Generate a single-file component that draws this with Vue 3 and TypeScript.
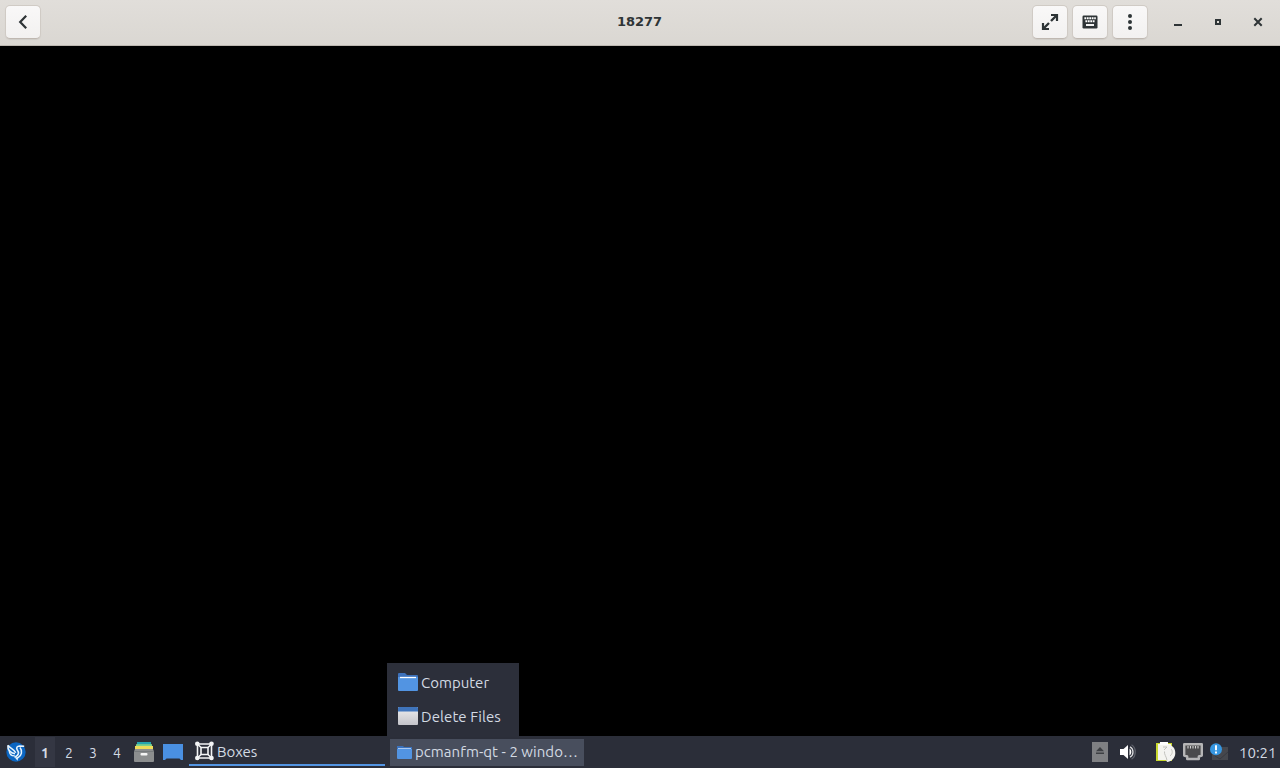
<script setup lang="ts">
import { ref } from "vue";

const title = "18277";
const clock = "10:21";
const desktops = [1, 2, 3, 4];
const activeDesktop = ref(1);
const showGroup = ref(true);
</script>

<template>
  <div class="screen">
    <!-- Window header -->
    <header class="header-bar">
      <div class="header-left">
        <button class="header-btn" aria-label="Back">
          <svg width="16" height="16" viewBox="0 0 16 16"><path d="M11.2 1.8 5.2 8l6 6.2" fill="none" stroke="#2e3436" stroke-width="2.2" /></svg>
        </button>
      </div>
      <h1 class="title">{{ title }}</h1>
      <div class="header-right">
        <button class="header-btn" aria-label="Fullscreen">
          <svg width="18" height="18" viewBox="0 0 18 18">
            <path d="M10 2h6v6M2 10v6h6" fill="none" stroke="#2e3436" stroke-width="2.2" />
            <path d="M16 2l-6 6M2 16l6-6" stroke="#2e3436" stroke-width="2.4" />
          </svg>
        </button>
        <button class="header-btn" aria-label="Keyboard">
          <svg width="16" height="14" viewBox="0 0 16 14">
            <rect x="0.5" y="0.5" width="15" height="13" rx="1.2" fill="#2e3436" />
            <path d="M2.4 3.3h11.4M3.4 6.2h9.6" stroke="#fff" stroke-width="1.9" stroke-dasharray="1.8 0.65" />
            <path d="M4 10h8" stroke="#fff" stroke-width="1.9" />
          </svg>
        </button>
        <button class="header-btn" aria-label="Menu">
          <svg width="6" height="18" viewBox="0 0 6 18" fill="#2e3436">
            <circle cx="3" cy="3" r="2" /><circle cx="3" cy="9" r="2" /><circle cx="3" cy="15" r="2" />
          </svg>
        </button>
        <div class="window-controls">
          <button class="win-btn" aria-label="Minimize">
            <svg width="16" height="16" viewBox="0 0 16 16"><path d="M4 10h8v2H4z" fill="#2e3436" /></svg>
          </button>
          <button class="win-btn" aria-label="Maximize">
            <svg width="16" height="16" viewBox="0 0 16 16"><path d="M6 6h4v4H6z" fill="none" stroke="#2e3436" stroke-width="2" /></svg>
          </button>
          <button class="win-btn" aria-label="Close">
            <svg width="16" height="16" viewBox="0 0 16 16"><path d="M4.3 4.3l7.4 7.4M11.7 4.3l-7.4 7.4" stroke="#2e3436" stroke-width="2" /></svg>
          </button>
        </div>
      </div>
    </header>

    <!-- Guest display -->
    <main class="display"></main>

    <!-- Panel -->
    <footer class="panel">
      <button class="start" aria-label="Applications">
        <svg width="20" height="20" viewBox="0 0 20 20">
          <circle cx="10" cy="10" r="9.7" fill="#0b66c2" />
          <path d="M1.8 3.2c2.7 3.4 6.5 4 8 7.6M1.8 3.2c-.2 3.8 2 7.6 7.2 8.6" fill="none" stroke="#e6f3fd" stroke-width="1.5" />
          <path d="M3.2 8.6c.2 3.4 2.4 5.4 5.6 5.3" fill="none" stroke="#e6f3fd" stroke-width="1.3" />
          <path d="M18.2 4.2l-4.7-.2c-2.4 0-3.5 1.9-2.3 3.7 1.6 2.2 2.6 5.4-2.7 7.5" fill="none" stroke="#e6f3fd" stroke-width="1.6" />
          <path d="M14 5.5c2.6 3.4 2 8-2.2 10.3" fill="none" stroke="#e6f3fd" stroke-width="1.5" />
          <path d="M12.2 15l-3.4.6 2.8 3.2z" fill="#e6f3fd" />
        </svg>
      </button>

      <div class="desktops">
        <button
          v-for="n in desktops"
          :key="n"
          :class="['desktop-btn', { active: n === activeDesktop }]"
          @click="activeDesktop = n"
        >{{ n }}</button>
      </div>

      <div class="launchers">
        <svg width="20" height="22" viewBox="0 0 20 22">
          <path d="M3 1h14v4H3z" fill="#24a4ae" />
          <path d="M2 3.2h16v4H2z" fill="#7ed08a" />
          <path d="M1 5h18v4H1z" fill="#eedb59" />
          <path d="M1 8h18l1 2.5V20a1 1 0 0 1-1 1H1a1 1 0 0 1-1-1v-9.5z" fill="#8c8e8f" />
          <path d="M0 10.5h20" stroke="#777b7d" />
          <rect x="6.5" y="12" width="7" height="2.6" rx="1" fill="#f5f5f5" />
        </svg>
        <svg width="20" height="16" viewBox="0 0 20 16">
          <path d="M0 0h20v16h-2l-1.5-1.5h-13L2 16H0z" fill="#4a90e2" />
        </svg>
      </div>

      <div class="tasks">
        <button class="task focused">
          <svg width="20" height="20" viewBox="0 0 20 20" fill="none" stroke="#f3f4f5">
            <path d="M3.5 3h14v14h-14z" stroke-width="1.6" />
            <path d="M7 6.5h7v7H7z" stroke-width="1.6" />
            <path d="M3.5 3 7 6.5M17.5 3 14 6.5M3.5 17 7 13.5M17.5 17 14 13.5" stroke-width="1.5" />
            <g fill="#f3f4f5" stroke="none">
              <circle cx="3.3" cy="2.8" r="2.3" /><circle cx="17.5" cy="2.8" r="2.3" />
              <circle cx="3.3" cy="17" r="2.3" /><circle cx="17.5" cy="17" r="2.3" />
            </g>
          </svg>
          <span>Boxes</span>
        </button>
        <div class="task-group">
          <button class="task hovered" @click="showGroup = !showGroup">
            <svg width="15" height="13" viewBox="0 0 15 13">
              <path d="M0 0h6l1 1h8v3H0z" fill="#3b72bd" />
              <path d="M0 3h15v9a1 1 0 0 1-1 1H1a1 1 0 0 1-1-1z" fill="#5294e2" />
              <path d="M1 2.5h13" stroke="#a9c8f0" />
            </svg>
            <span class="group-label">pcmanfm-qt - 2 windo…</span>
          </button>
          <div v-if="showGroup" class="group-popup">
            <button class="popup-item">
              <svg width="20" height="18" viewBox="0 0 20 18">
                <path d="M0 1a1 1 0 0 1 1-1h6l2 2h10a1 1 0 0 1 1 1v4H0z" fill="#3d71ba" />
                <path d="M0 4h20v13a1 1 0 0 1-1 1H1a1 1 0 0 1-1-1z" fill="#5294e2" />
                <path d="M2 4.5h16" stroke="#fff" stroke-width="1.3" />
              </svg>
              <span>Computer</span>
            </button>
            <button class="popup-item">
              <svg width="20" height="18" viewBox="0 0 20 18">
                <defs>
                  <linearGradient id="pane" x1="0" y1="0" x2="0" y2="1">
                    <stop offset="0" stop-color="#eeeeef" />
                    <stop offset="1" stop-color="#c4c4ca" />
                  </linearGradient>
                </defs>
                <rect width="20" height="18" rx="1" fill="url(#pane)" />
                <path d="M0 4.5V1a1 1 0 0 1 1-1h18a1 1 0 0 1 1 1v3.5z" fill="#3f74bb" />
              </svg>
              <span class="delete-label">Delete Files</span>
            </button>
          </div>
        </div>
      </div>

      <!-- Tray -->
      <div class="tray">
        <svg class="eject" width="16" height="20" viewBox="0 0 16 20">
          <rect width="16" height="20" fill="#7f8083" />
          <path d="M8 5l4 4.2H4zM4 10.5h8V12H4z" fill="#3d3f43" />
        </svg>
        <svg class="volume" width="16" height="16" viewBox="0 0 16 16">
          <path d="M0 5h3.500L8 1v14l-4.500-4H0z" fill="#fff" />
          <path d="M9.500 4.500c2.400 1.600 2.400 5.400 0 7z" fill="#fff" />
          <path d="M10 2.800c4 2 4 8.400 0 10.400" fill="none" stroke="#d9dadd" stroke-width="1.300" />
          <path d="M11.500.8c5 3 5 11.400 0 14.400" fill="none" stroke="#5c5f69" stroke-width="1.300" />
        </svg>
        <svg class="clipboard" width="20" height="22" viewBox="0 0 20 22">
          <path d="M0 2h16v18H0z" fill="#c9d82f" />
          <path d="M2 3h13v16H2z" fill="#f4f4ef" />
          <path d="M4 1h8v3H4z" fill="#fff" />
          <path d="M12 4c5 0 7.500 4 7.300 8.500S15 21 11 21c-1-4-3.500-5-4-9 .2-4 2-8 5-8z" fill="#f3f3f1" />
          <path d="M7 6h4L8 9M11 19.500c-.5-4-3-6-2.500-9M15 8c2 2 1.500 5-1 7" fill="none" stroke="#bdbdb8" stroke-width=".9" />
        </svg>
        <svg class="network" width="20" height="18" viewBox="0 0 20 18">
          <path d="M1.200 1.200h17.600v11.300l-3 1V16H4.200v-2.500l-3-1z" fill="#4a4a4c" stroke="#b5b5b6" stroke-width="2.400" stroke-linejoin="round" />
          <path d="M5 5.500V3M7.500 5.500V3M10 5.500V3M12.500 5.500V3M15 5.500V3" stroke="#d3d3d3" stroke-width="1.100" />
        </svg>
        <svg class="notify" width="18" height="18" viewBox="0 0 18 18">
          <path d="M2 4h16v13H2z" fill="#45474d" />
          <path d="M5 13l5 3 8-7" fill="none" stroke="#383a40" />
          <circle cx="6" cy="6.300" r="6" fill="#3696e0" />
          <path d="M6 2.200v5M6 8.500v2" stroke="#fff" stroke-width="1.900" />
        </svg>
        <span class="clock">{{ clock }}</span>
      </div>
    </footer>
  </div>
</template>

<style>
body {
  margin: 0;
  background: #000;
}
</style>

<style scoped>
.screen {
  height: 768px;
  display: flex;
  flex-direction: column;
  overflow: hidden;
  background: #000;
  font-family: "Ubuntu", "Noto Sans", sans-serif;
}

button {
  margin: 0;
  padding: 0;
  border: none;
  background: none;
  font: inherit;
  color: inherit;
}

svg {
  display: block;
  flex: none;
}

/* Window header */
.header-bar {
  box-sizing: border-box;
  height: 46px;
  flex: none;
  display: grid;
  grid-template-columns: 1fr auto 1fr;
  align-items: center;
  padding: 0 6px 2px 5px;
  background: linear-gradient(#e1deda, #dad7d2);
  border-bottom: 1px solid #bdb8b1;
}

.header-btn {
  box-sizing: border-box;
  width: 36px;
  height: 34px;
  display: flex;
  align-items: center;
  justify-content: center;
  border: 1px solid #d0cbc5;
  border-bottom-color: #bfb8b1;
  border-radius: 5px;
  background: linear-gradient(#f9f8f8, #f2f1f0);
  box-shadow: 0 1px 1px rgba(0, 0, 0, 0.06);
}

.title {
  margin: 0;
  font: bold 13px "DejaVu Sans", sans-serif;
  color: #2e3436;
}

.header-right {
  display: flex;
  justify-content: flex-end;
  gap: 4px;
}

.window-controls {
  display: flex;
  align-items: center;
  gap: 24px;
  margin: 0 8px 0 18px;
}

/* Guest display */
.display {
  flex: 1;
}

/* Panel */
.panel {
  height: 32px;
  flex: none;
  display: flex;
  align-items: center;
  background: #2b2e39;
  color: #d3dae3;
  font-size: 15px;
}

.start {
  padding: 0 7px 0 6px;
}

.desktops {
  display: flex;
}

.desktop-btn {
  width: 24px;
  height: 30px;
  padding-top: 2px;
  text-align: center;
  line-height: 28px;
  font-size: 14px;
}

.desktop-btn.active {
  width: 20px;
  margin-right: 2px;
  margin-left: 2px;
  background: #343743;
  font-weight: 600;
}

.launchers {
  display: flex;
  align-items: center;
  gap: 9px;
  margin-left: 5px;
}

.tasks {
  display: flex;
  align-self: flex-start;
  gap: 5px;
  margin-left: 6px;
}

.task {
  box-sizing: border-box;
  height: 30px;
  display: flex;
  align-items: center;
  white-space: nowrap;
}

.task.focused {
  width: 196px;
  padding: 2px 0 0 5px;
  gap: 3px;
  border-bottom: 2px solid #5294e2;
}

.task-group {
  position: relative;
}

.task.hovered {
  width: 194px;
  height: 27px;
  margin-top: 3px;
  padding: 0 0 1px 7px;
  gap: 3px;
  background: #484e5d;
}

.group-label {
  padding-bottom: 2px;
  letter-spacing: 0.04px;
}

.group-popup {
  position: absolute;
  left: -3px;
  bottom: 29px;
  box-sizing: border-box;
  width: 132px;
  height: 74px;
  padding-top: 2px;
  background: #2c2f3a;
}

.popup-item {
  width: 100%;
  height: 34px;
  display: flex;
  align-items: center;
  gap: 3px;
  padding-left: 11px;
  white-space: nowrap;
}

.delete-label {
  letter-spacing: 0.08px;
}

/* Tray */
.tray {
  display: flex;
  align-items: center;
  margin-left: auto;
  padding-right: 4px;
}

.volume {
  margin-left: 12px;
}

.clipboard {
  margin-left: 20px;
}

.network {
  margin-left: 7px;
}

.notify {
  margin-left: 7px;
}

.clock {
  width: 37px;
  margin-left: 11px;
  text-align: right;
  white-space: nowrap;
}
</style>
